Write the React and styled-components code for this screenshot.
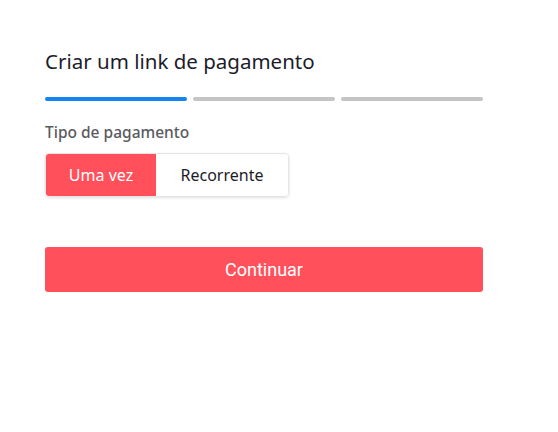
import React, { useState } from "react";
import styled, { createGlobalStyle } from "styled-components";

const GlobalStyle = createGlobalStyle`
  body {
    margin: 0;
    background: #ffffff;
    font-family: "Noto Sans", "Lato", sans-serif;
  }
`;

const Page = styled.div`
  width: 438px;
  padding: 47px 0 0 45px;
`;

const Title = styled.h1`
  margin: 0;
  font-size: 20.5px;
  font-weight: 400;
  color: #1c1c2a;
  line-height: 28px;
`;

const Steps = styled.div`
  display: grid;
  grid-template-columns: repeat(3, 1fr);
  gap: 6px;
  margin-top: 22px;
`;

const Step = styled.div`
  height: 4px;
  border-radius: 2px;
  background: ${({ active }) => (active ? "#1584f0" : "#c4c4c4")};
`;

const Label = styled.div`
  margin-top: 21px;
  font-size: 15.5px;
  font-weight: 500;
  color: #5a5a5e;
  line-height: 20px;
`;

const Toggle = styled.div`
  display: inline-flex;
  margin-top: 11px;
  border-radius: 4px;
  box-shadow: 0 1px 3px rgba(0, 0, 0, 0.12);
  border: 1px solid #e4e4e4;
  overflow: hidden;
`;

const Option = styled.button`
  height: 42px;
  width: ${({ w }) => w}px;
  border: none;
  margin: 0;
  padding: 0;
  font-family: "Noto Sans", "Lato", sans-serif;
  font-size: 16px;
  cursor: pointer;
  background: ${({ selected }) => (selected ? "#ff505b" : "#ffffff")};
  color: ${({ selected }) => (selected ? "#ffffff" : "#1c1c2a")};
`;

const Submit = styled.button`
  display: block;
  width: 438px;
  height: 45px;
  margin-top: 50px;
  border: none;
  border-radius: 3px;
  background: #ff505b;
  color: #ffffff;
  font-family: "Roboto", "Noto Sans", sans-serif;
  font-size: 18px;
  cursor: pointer;
`;

export default function App() {
  const [type, setType] = useState("once");
  return (
    <>
      <GlobalStyle />
      <Page>
        <Title>Criar um link de pagamento</Title>
        <Steps>
          <Step active />
          <Step />
          <Step />
        </Steps>
        <Label>Tipo de pagamento</Label>
        <Toggle>
          <Option w={110} selected={type === "once"} onClick={() => setType("once")}>
            Uma vez
          </Option>
          <Option w={132} selected={type === "rec"} onClick={() => setType("rec")}>
            Recorrente
          </Option>
        </Toggle>
        <Submit>Continuar</Submit>
      </Page>
    </>
  );
}
